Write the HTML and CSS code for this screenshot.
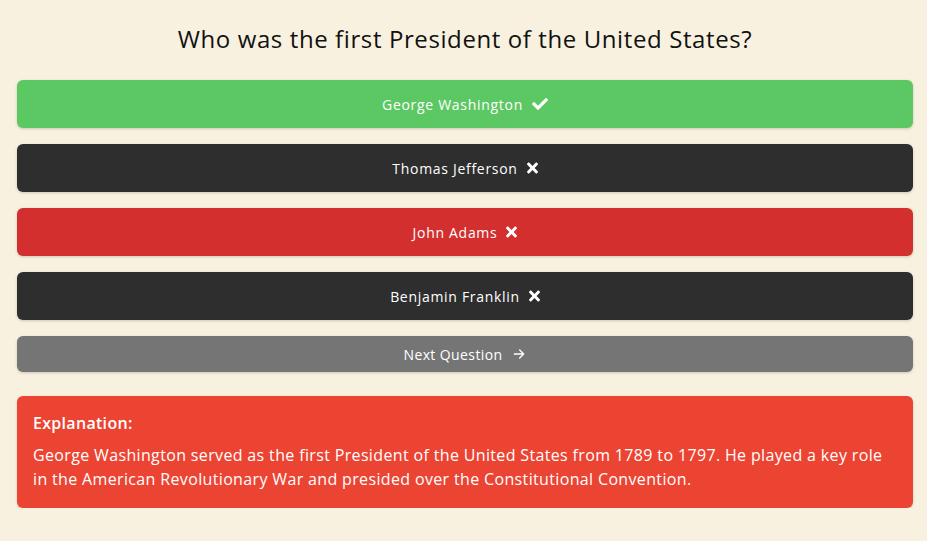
FILE: index.html
```html
<!DOCTYPE html>
<html lang="en">
<head>
<meta charset="utf-8">
<title>Quiz</title>
<link rel="stylesheet" href="styles.css">
</head>
<body>
<main class="quiz">
  <h1 class="question">Who was the first President of the United States?</h1>
  <div class="answers">
    <button class="answer correct">George Washington
      <svg class="icon" viewBox="0 0 512 512" width="16" height="16"><path fill="currentColor" d="M173.9 439.4L7.5 273c-10-10-10-26.2 0-36.2l36.2-36.2c10-10 26.2-10 36.2 0L192 312.7 432.1 72.6c10-10 26.2-10 36.2 0l36.2 36.2c10 10 10 26.2 0 36.2L210.1 439.4c-10 10-26.2 10-36.2 0z"/></svg>
    </button>
    <button class="answer dark">Thomas Jefferson
      <svg class="icon" viewBox="0 0 352 512" width="11" height="16"><path fill="currentColor" d="M242.7 256l100.1-100.1c12.3-12.3 12.3-32.2 0-44.5l-22.2-22.2c-12.3-12.3-32.2-12.3-44.5 0L176 189.3 75.9 89.2c-12.3-12.3-32.2-12.3-44.5 0L9.2 111.4c-12.3 12.3-12.3 32.2 0 44.5L109.3 256 9.2 356.1c-12.3 12.3-12.3 32.2 0 44.5l22.2 22.2c12.3 12.3 32.2 12.3 44.5 0L176 322.7l100.1 100.1c12.3 12.3 32.2 12.3 44.5 0l22.2-22.2c12.3-12.3 12.3-32.2 0-44.5L242.7 256z"/></svg>
    </button>
    <button class="answer wrong">John Adams
      <svg class="icon" viewBox="0 0 352 512" width="11" height="16"><path fill="currentColor" d="M242.7 256l100.1-100.1c12.3-12.3 12.3-32.2 0-44.5l-22.2-22.2c-12.3-12.3-32.2-12.3-44.5 0L176 189.3 75.9 89.2c-12.3-12.3-32.2-12.3-44.5 0L9.2 111.4c-12.3 12.3-12.3 32.2 0 44.5L109.3 256 9.2 356.1c-12.3 12.3-12.3 32.2 0 44.5l22.2 22.2c12.3 12.3 32.2 12.3 44.5 0L176 322.7l100.1 100.1c12.3 12.3 32.2 12.3 44.5 0l22.2-22.2c12.3-12.3 12.3-32.2 0-44.5L242.7 256z"/></svg>
    </button>
    <button class="answer dark">Benjamin Franklin
      <svg class="icon" viewBox="0 0 352 512" width="11" height="16"><path fill="currentColor" d="M242.7 256l100.1-100.1c12.3-12.3 12.3-32.2 0-44.5l-22.2-22.2c-12.3-12.3-32.2-12.3-44.5 0L176 189.3 75.9 89.2c-12.3-12.3-32.2-12.3-44.5 0L9.2 111.4c-12.3 12.3-12.3 32.2 0 44.5L109.3 256 9.2 356.1c-12.3 12.3-12.3 32.2 0 44.5l22.2 22.2c12.3 12.3 32.2 12.3 44.5 0L176 322.7l100.1 100.1c12.3 12.3 32.2 12.3 44.5 0l22.2-22.2c12.3-12.3 12.3-32.2 0-44.5L242.7 256z"/></svg>
    </button>
  </div>
  <button class="next">Next Question
    <svg class="arrow" viewBox="0 0 24 24" width="16" height="16"><path d="M5 12h14M13 6l6 6-6 6" fill="none" stroke="currentColor" stroke-width="2" stroke-linecap="round" stroke-linejoin="round"/></svg>
  </button>
  <section class="explanation">
    <h2 class="exp-title">Explanation:</h2>
    <p class="exp-text">George Washington served as the first President of the United States from 1789 to 1797. He played a key role in the American Revolutionary War and presided over the Constitutional Convention.</p>
  </section>
</main>
</body>
</html>
```

FILE: styles.css
```css
* { box-sizing: border-box; }
html, body { margin: 0; padding: 0; }
body {
  background: #f9f1df;
  font-family: "Open Sans", "DejaVu Sans", sans-serif;
  color: #111;
}
.quiz {
  padding: 19px 14px 0 17px;
  display: flex;
  flex-direction: column;
}
.question {
  margin: 0 0 21px;
  text-align: center;
  font-size: 24px;
  font-weight: 400;
  line-height: 40px;
  letter-spacing: 0.6px;
  color: #111;
}
.answers {
  display: flex;
  flex-direction: column;
  gap: 16px;
}
.answer, .next {
  border: none;
  border-radius: 6px;
  color: #fff;
  font-family: inherit;
  font-size: 14px;
  font-weight: 500;
  letter-spacing: 0.7px;
  display: flex;
  align-items: center;
  justify-content: center;
  gap: 9px;
  box-shadow: 0 1px 3px rgba(0,0,0,0.18);
  cursor: pointer;
}
.answer { height: 48px; }
.correct { background: #5cc863; }
.dark { background: #2e2e2e; }
.wrong { background: #d32f2f; }
.next {
  margin-top: 16px;
  height: 36px;
  background: #757575;
  letter-spacing: 0.4px;
  gap: 8px;
}
.explanation {
  margin-top: 24px;
  background: #ec4433;
  color: #fff;
  border-radius: 6px;
  padding: 14px 16px 17px;
  box-shadow: 0 1px 3px rgba(0,0,0,0.15);
}
.exp-title {
  margin: 0 0 7px;
  font-size: 16px;
  font-weight: 600;
  line-height: 26px;
  letter-spacing: 0.3px;
}
.exp-text {
  margin: 0;
  font-size: 16px;
  line-height: 24px;
  letter-spacing: 0.35px;
}
```
